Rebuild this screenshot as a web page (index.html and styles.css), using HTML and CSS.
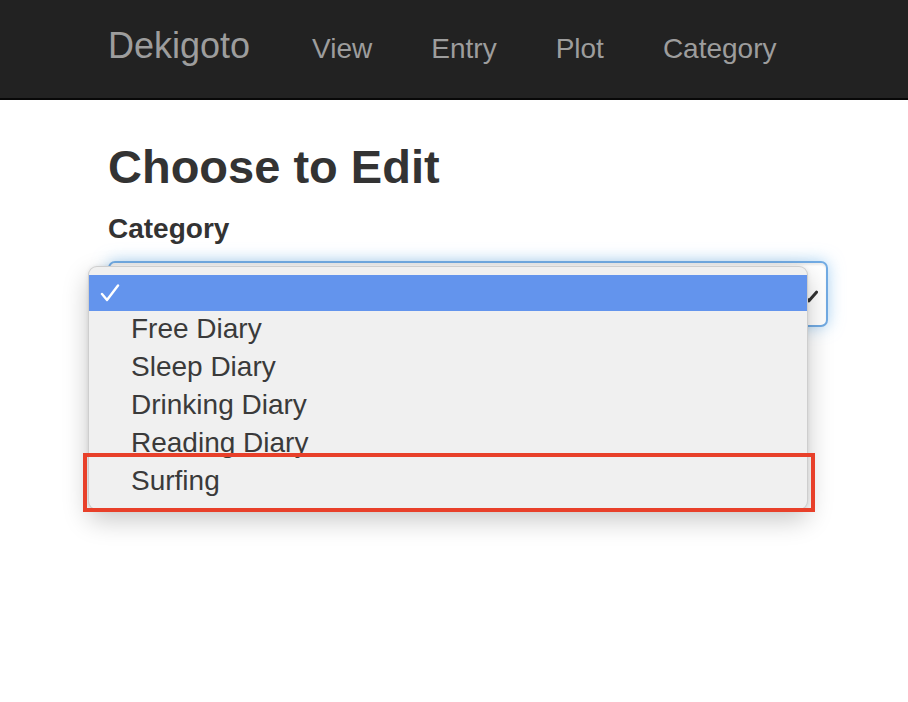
FILE: index.html
```html
<!DOCTYPE html>
<html lang="en">
<head>
<meta charset="utf-8">
<title>Dekigoto</title>
<link rel="stylesheet" href="styles.css">
</head>
<body>
<nav class="navbar">
  <div class="nav-inner">
    <a class="brand" href="#">Dekigoto</a>
    <a class="nav-link" href="#">View</a>
    <a class="nav-link" href="#">Entry</a>
    <a class="nav-link" href="#">Plot</a>
    <a class="nav-link" href="#">Category</a>
  </div>
</nav>
<main class="container">
  <h1 class="title">Choose to Edit</h1>
  <label class="field-label">Category</label>
  <div class="select-wrap">
    <div class="select-box">
      <svg class="select-check" width="14" height="13" viewBox="0 0 14 13"><path d="M1.8 7.8 L5 10.8 L12.5 2.2" fill="none" stroke="#333" stroke-width="3" stroke-linecap="round" stroke-linejoin="round"/></svg>
    </div>
    <ul class="menu">
      <li class="menu-item active">
        <svg class="menu-check" width="20" height="18" viewBox="0 0 20 18"><path d="M2 10 L7 16 L18 1.5" fill="none" stroke="#fff" stroke-width="2.4" stroke-linecap="round" stroke-linejoin="round"/></svg>
      </li>
      <li class="menu-item">Free Diary</li>
      <li class="menu-item">Sleep Diary</li>
      <li class="menu-item">Drinking Diary</li>
      <li class="menu-item">Reading Diary</li>
      <li class="menu-item">Surfing</li>
    </ul>
    <div class="highlight-box"></div>
  </div>
</main>
</body>
</html>
```
FILE: styles.css
```css
html, body {
  margin: 0;
  padding: 0;
  background: #fff;
  font-family: "Liberation Sans", Arial, Helvetica, sans-serif;
}

body {
  min-height: 702px;
}

.navbar {
  background: #222;
  height: 98px;
  border-bottom: 2px solid #080808;
}

.nav-inner {
  display: flex;
  align-items: baseline;
  box-sizing: border-box;
  height: 98px;
  padding: 26px 0 0 108px;
}

.brand {
  color: #9d9d9d;
  font-size: 36px;
  line-height: 40px;
  text-decoration: none;
  margin-right: 62px;
}

.nav-link {
  color: #9d9d9d;
  font-size: 28px;
  line-height: 32px;
  text-decoration: none;
  margin-right: 59px;
}

.container {
  margin-left: 108px;
  width: 720px;
  min-height: 560px;
}

.title {
  margin: 40px 0 0;
  font-size: 47px;
  line-height: 53px;
  font-weight: bold;
  color: #333;
}

.field-label {
  display: block;
  margin-top: 16px;
  font-size: 28px;
  line-height: 40px;
  font-weight: bold;
  color: #333;
}

.select-wrap {
  position: relative;
  margin-top: 12px;
}

.select-box {
  box-sizing: border-box;
  height: 66px;
  width: 720px;
  border: 2px solid #72abe3;
  border-radius: 7px;
  background: #fff;
  box-shadow: inset 0 2px 2px rgba(0,0,0,0.075), 0 0 16px rgba(102,175,233,0.55);
  display: flex;
  align-items: center;
  justify-content: flex-end;
  padding-right: 8px;
}

.select-check {
  display: block;
  margin-top: 4px;
}

.menu {
  position: absolute;
  left: -20px;
  top: 5px;
  width: 720px;
  box-sizing: border-box;
  margin: 0;
  padding: 8px 0;
  list-style: none;
  background: #f0f0f0;
  border: 1px solid rgba(0,0,0,0.14);
  border-radius: 9px;
  box-shadow: 0 10px 26px rgba(0,0,0,0.22), 0 0 4px rgba(0,0,0,0.08);
  z-index: 2;
}

.menu-item {
  height: 38px;
  line-height: 35px;
  padding-left: 42px;
  font-size: 28px;
  color: #3a3a3a;
}

.menu-item.active {
  height: 36px;
  background: #6394ed;
  padding-left: 11px;
  display: flex;
  align-items: center;
}

.menu-check {
  display: block;
}

.highlight-box {
  position: absolute;
  left: -25px;
  top: 192px;
  width: 732px;
  height: 59px;
  box-sizing: border-box;
  border: 4px solid #e8402a;
  z-index: 3;
}
```
